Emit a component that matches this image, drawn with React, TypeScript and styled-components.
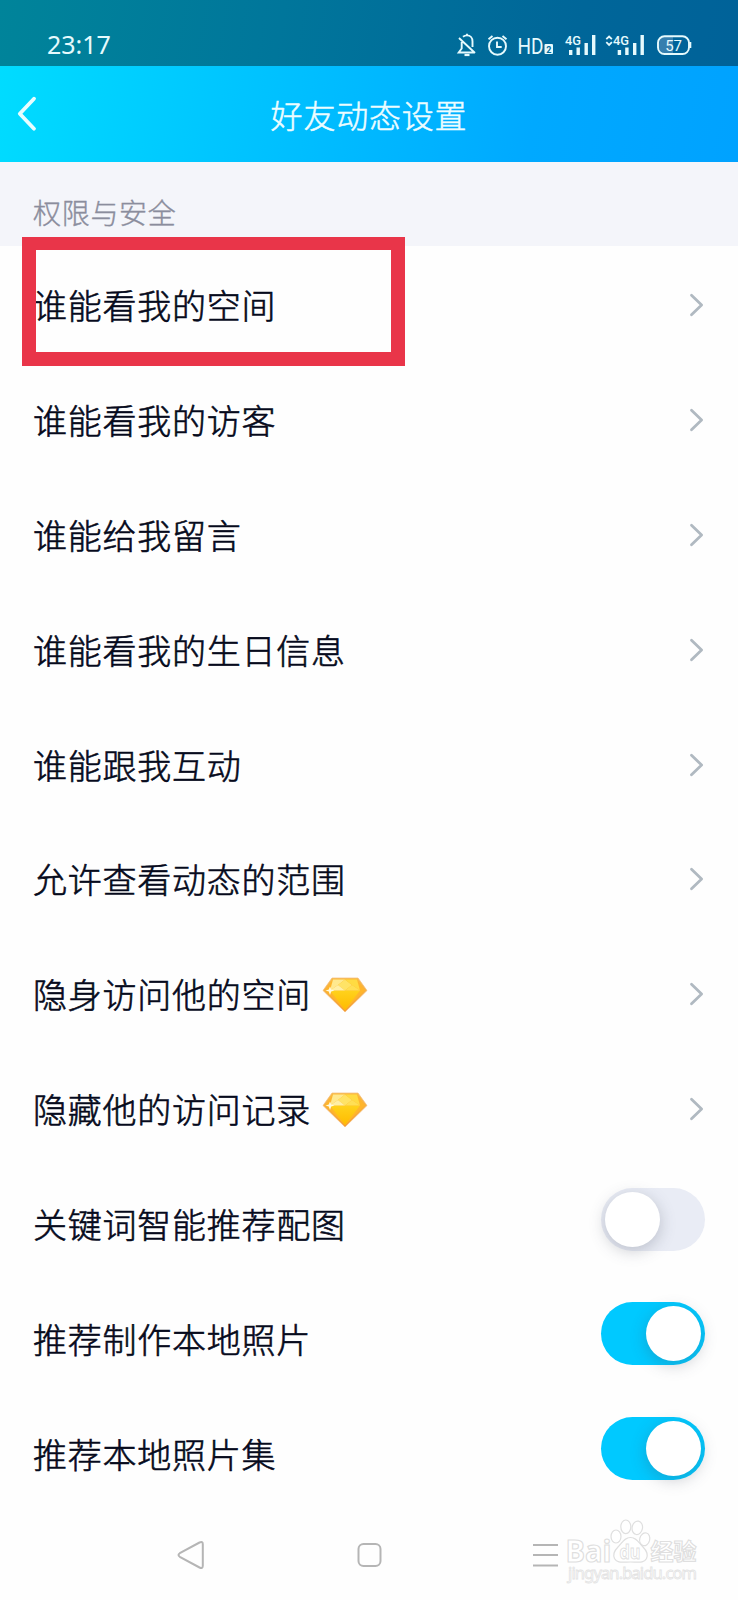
import React from 'react';
import styled, { createGlobalStyle } from 'styled-components';

const GlobalStyle = createGlobalStyle`
  * { box-sizing: border-box; }
  body {
    margin: 0;
    background: #fefefe;
    font-family: Roboto, "Noto Sans CJK SC", sans-serif;
  }
  svg { display: block; flex: none; }
`;

const Screen = styled.div`
  width: 738px;
  height: 1600px;
  display: flex;
  flex-direction: column;
  position: relative;
  overflow: hidden;
  background: #fefefe;
`;

const StatusBar = styled.div`
  height: 66px;
  flex: none;
  display: flex;
  justify-content: space-between;
  padding: 23px 43px 0 47px;
  color: #e6fafd;
  background: linear-gradient(100deg, #00849a 0%, #00769b 38%, #006699 78%, #006299 100%);
`;

const Clock = styled.div`
  font: 400 25px/42px "Noto Sans", "Noto Sans CJK SC", sans-serif;
  letter-spacing: 0;
`;

const StatusGroup = styled.div`
  padding-top: 7px;
`;

const Header = styled.header`
  height: 96px;
  flex: none;
  display: grid;
  grid-template-columns: 60px 1fr 60px;
  align-items: center;
  background: linear-gradient(100deg, #00dcff 0%, #00c6ff 30%, #00a9ff 72%, #00a2ff 100%);
`;

const BackButton = styled.button`
  border: 0;
  padding: 0 0 0 16px;
  background: none;
`;

const Title = styled.h1`
  margin: 0;
  padding-top: 5px;
  text-align: center;
  color: #edfdff;
  font-size: 32px;
  font-weight: 300;
  line-height: 48px;
  letter-spacing: 0.8px;
  -webkit-text-stroke: 0.5px currentColor;
`;

const SectionLabel = styled.div`
  height: 84px;
  flex: none;
  padding: 33px 33px 0;
  background: #f4f5fa;
  color: #8b8d9d;
  font-size: 28px;
  font-weight: 300;
  line-height: 40px;
  letter-spacing: 0.7px;
  -webkit-text-stroke: 0.4px currentColor;
`;

const Row = styled.div`
  height: 114.9px;
  flex: none;
  display: flex;
  align-items: center;
  padding: 0 33px;
`;

const Label = styled.span`
  color: #060a1c;
  font-size: 34px;
  font-weight: 300;
  line-height: 50px;
  letter-spacing: 0.75px;
  padding-top: 7px;
  -webkit-text-stroke: 0.6px currentColor;
`;

const GemSlot = styled.span`
  margin: 4px 0 0 11px;
`;

const Trailing = styled.span<{ $toggle?: boolean }>`
  margin-left: auto;
  padding: ${(p) => (p.$toggle ? '0 0 7px' : '3px 0 0')};
`;

const Track = styled.button<{ $on: boolean }>`
  display: flex;
  align-items: center;
  justify-content: ${(p) => (p.$on ? 'flex-end' : 'flex-start')};
  width: 104px;
  height: 63px;
  padding: 0 4px;
  border: 0;
  border-radius: 32px;
  background: ${(p) => (p.$on ? '#00c9ff' : '#e9ecf5')};
`;

const Knob = styled.span`
  width: 55px;
  height: 55px;
  border-radius: 50%;
  background: #fff;
  box-shadow: 0 4px 16px rgba(70, 75, 95, 0.28);
`;

const Highlight = styled.div`
  position: absolute;
  left: 22px;
  top: 237px;
  width: 383px;
  height: 129px;
  border: 14px solid #e93549;
  border-top-width: 13px;
`;

const NavBar = styled.nav`
  flex: 1;
  display: flex;
  padding: 30px 178px 0 177px;
  justify-content: space-between;
`;

const Watermark = styled.svg`
  position: absolute;
  left: 560px;
  top: 1515px;
`;

const StatusIcons = () => (
  <svg width="240" height="30" viewBox="455 30 240 30" fill="none" stroke="#e6fafd" strokeWidth="1.9">
    <path d="M461 52.5h13M459 38l16 15M463 36.7c1-.8 2.4-1.3 4-1.3 3.4 0 5.5 2.5 5.5 6v5.5M461.7 42v6.5l-3 4H461M467 35.4v-1.6" />
    <path d="M464.5 55h5" strokeWidth="2.2" />
    <circle cx="497.5" cy="46.2" r="8.5" />
    <path d="M497 41.5v5.5h4.7M488.5 39.3l4-3.3M506.5 39.3l-4-3.3" />
    <rect x="544.5" y="44" width="8.5" height="10" rx="1" fill="#e6fafd" stroke="none" />
    <g fill="#e6fafd" stroke="none" fontFamily="Roboto, sans-serif">
      <text x="517.5" y="53.7" fontSize="22" textLength="26" lengthAdjust="spacingAndGlyphs">HD</text>
      <text x="546.2" y="52.6" fontSize="9" fontWeight="700" fill="#006a99">2</text>
      <text x="565" y="45.2" fontSize="13.5" fontWeight="500" textLength="16" lengthAdjust="spacingAndGlyphs">4G</text>
      <text x="613" y="45.2" fontSize="13.5" fontWeight="500" textLength="16" lengthAdjust="spacingAndGlyphs">4G</text>
      <path d="M569 50h3.4v5H569zM576.5 47.5h3.4V55h-3.4zM584.5 43h3.4v12h-3.4zM592 35h3.4v20H592z" />
      <path d="M617.7 50h3.4v5h-3.4zM625.2 47.5h3.4V55h-3.4zM633 43h3.4v12H633zM640.5 35h3.4v20h-3.4z" />
    </g>
    <path d="M606.3 39.2l2.8-2.7 2.8 2.7M606.3 42.2l2.8 2.7 2.8-2.7" strokeWidth="1.8" />
    <path d="M665 37h8v17h-8c-4 0-6-3-6-8.5s2-8.5 6-8.5z" fill="#367fae" stroke="none" />
    <rect x="658" y="36.3" width="31" height="17.7" rx="6.5" />
    <path d="M690.3 42v6" strokeWidth="2" />
    <text x="673.6" y="50.5" fontSize="15" textAnchor="middle" fill="#e6fafd" stroke="none" fontFamily="Roboto, sans-serif">57</text>
  </svg>
);

const Chevron = () => (
  <svg width="17" height="24" viewBox="0 0 17 24" fill="none">
    <path d="M3.5 2.3L13.6 12 3.5 21.7" stroke="#b0b9c1" strokeWidth="2.8" strokeLinecap="round" strokeLinejoin="round" />
  </svg>
);

const Gem = () => (
  <svg width="46" height="36" viewBox="0 0 46 36">
    <defs>
      <linearGradient id="gemFrame" x1="0" y1="0" x2="0" y2="1">
        <stop offset="0" stopColor="#f8bc48" />
        <stop offset="1" stopColor="#f59b30" />
      </linearGradient>
      <linearGradient id="gemBase" x1="0" y1="0" x2="0" y2="1">
        <stop offset="0" stopColor="#ffd21c" />
        <stop offset="1" stopColor="#ffbb00" />
      </linearGradient>
    </defs>
    <path d="M10 1h26l9 12.5L23 35 1 13.500z" fill="url(#gemFrame)" stroke="#f5bd78" strokeWidth="0.7" strokeLinejoin="round" />
    <path d="M11 2.500h24L43 13.500 23 33 3 13.500z" fill="#ffb52b" />
    <path d="M8 13.500h30L23 33z" fill="url(#gemBase)" />
    <path d="M11 2.500H23L16 8 8 13.500z" fill="#ffe98f" />
    <path d="M23 2.500L16 8 23 13.500 30 8z" fill="#ffe366" />
    <path d="M23 2.500h12L38 13.500 30 8z" fill="#ffdb42" />
    <path d="M8 13.500L16 8l7 5.500z" fill="#ffefa6" />
    <path d="M38 13.500L30 8l-7 5.500z" fill="#ffdf55" />
    <path d="M8 9.500l1.200 3 3.300 1-3.300 1L8 18l-1.200-3.500-3.300-1 3.300-1z" fill="#fffbe0" />
  </svg>
);

const BaiduMark = () => (
  <Watermark width="150" height="75" viewBox="560 1515 150 75" fill="#fff" stroke="#dfdfdf" strokeWidth="1.2">
    <g fontFamily="Open Sans, sans-serif" fontWeight="700">
      <text x="565.5" y="1561.5" fontSize="31" textLength="46" lengthAdjust="spacingAndGlyphs">Bai</text>
      <path d="M630.5 1537.5c-6 0-8 5-12.500 9.500-4 4-5.500 7-3.500 11.500 2.500 5 8 3.500 16 3.500s13.500 1.500 16-3.500c2-4.500.5-7.500-3.500-11.500-4.500-4.500-6.500-9.500-12.500-9.500z" />
      <ellipse cx="616" cy="1536.5" rx="5" ry="6.5" />
      <ellipse cx="625.8" cy="1526.8" rx="5" ry="6.8" />
      <ellipse cx="637.3" cy="1527.8" rx="5.2" ry="6.8" transform="rotate(10 637.3 1527.8)" />
      <ellipse cx="644.7" cy="1539.3" rx="5" ry="6.5" transform="rotate(15 644.7 1539.3)" />
      <text x="619.5" y="1558.5" fontSize="20" strokeWidth="1" textLength="21" lengthAdjust="spacingAndGlyphs">du</text>
    </g>
    <text x="650.5" y="1559.5" fontSize="23" fontWeight="700" fontFamily="Noto Sans CJK SC, sans-serif" textLength="46" strokeWidth="1.1">经验</text>
    <text x="568" y="1579" fontSize="16.5" fontFamily="Noto Sans, sans-serif" textLength="129" stroke="#e3e3e3" strokeWidth="0.8">jingyan.baidu.com</text>
  </Watermark>
);

type Item = { label: string; gem?: boolean; on?: boolean };

const items: Item[] = [
  { label: '谁能看我的空间' },
  { label: '谁能看我的访客' },
  { label: '谁能给我留言' },
  { label: '谁能看我的生日信息' },
  { label: '谁能跟我互动' },
  { label: '允许查看动态的范围' },
  { label: '隐身访问他的空间', gem: true },
  { label: '隐藏他的访问记录', gem: true },
  { label: '关键词智能推荐配图', on: false },
  { label: '推荐制作本地照片', on: true },
  { label: '推荐本地照片集', on: true },
];

const SettingRow = ({ label, gem, on }: Item) => (
  <Row>
    <Label>{label}</Label>
    {gem && <GemSlot><Gem /></GemSlot>}
    <Trailing $toggle={on !== undefined}>
      {on === undefined ? <Chevron /> : <Track $on={on} role="switch" aria-checked={on}><Knob /></Track>}
    </Trailing>
  </Row>
);

export default function App() {
  return (
    <Screen lang="zh-CN">
      <GlobalStyle />
      <StatusBar>
        <Clock>23:17</Clock>
        <StatusGroup><StatusIcons /></StatusGroup>
      </StatusBar>
      <Header>
        <BackButton aria-label="返回">
          <svg width="24" height="38" viewBox="0 0 24 38" fill="none">
            <path d="M18 3.700L3.800 18.700l14.200 15" stroke="#e8fdff" strokeWidth="3.800" strokeLinecap="round" strokeLinejoin="round" />
          </svg>
        </BackButton>
        <Title>好友动态设置</Title>
      </Header>
      <SectionLabel>权限与安全</SectionLabel>
      {items.map((item) => <SettingRow key={item.label} {...item} />)}
      <NavBar>
        <svg width="28" height="30" viewBox="0 0 28 30" fill="none" stroke="#b5b5b5" strokeWidth="2">
          <path d="M2.800 13.200L22.500 2.500q3.300-1.500 3.300 1.800v21.400q0 3.300-3.300 1.800L2.800 16.800q-2.600-1.800 0-3.600z" />
        </svg>
        <svg width="28" height="30" viewBox="0 0 28 30" fill="none" stroke="#b5b5b5" strokeWidth="2">
          <rect x="3.500" y="4" width="22" height="22" rx="5" />
        </svg>
        <svg width="28" height="30" viewBox="0 0 28 30" fill="none" stroke="#b5b5b5" strokeWidth="2">
          <path d="M1 5h25M1 15h25M1 25.500h25" />
        </svg>
      </NavBar>
      <Highlight />
      <BaiduMark />
    </Screen>
  );
}
